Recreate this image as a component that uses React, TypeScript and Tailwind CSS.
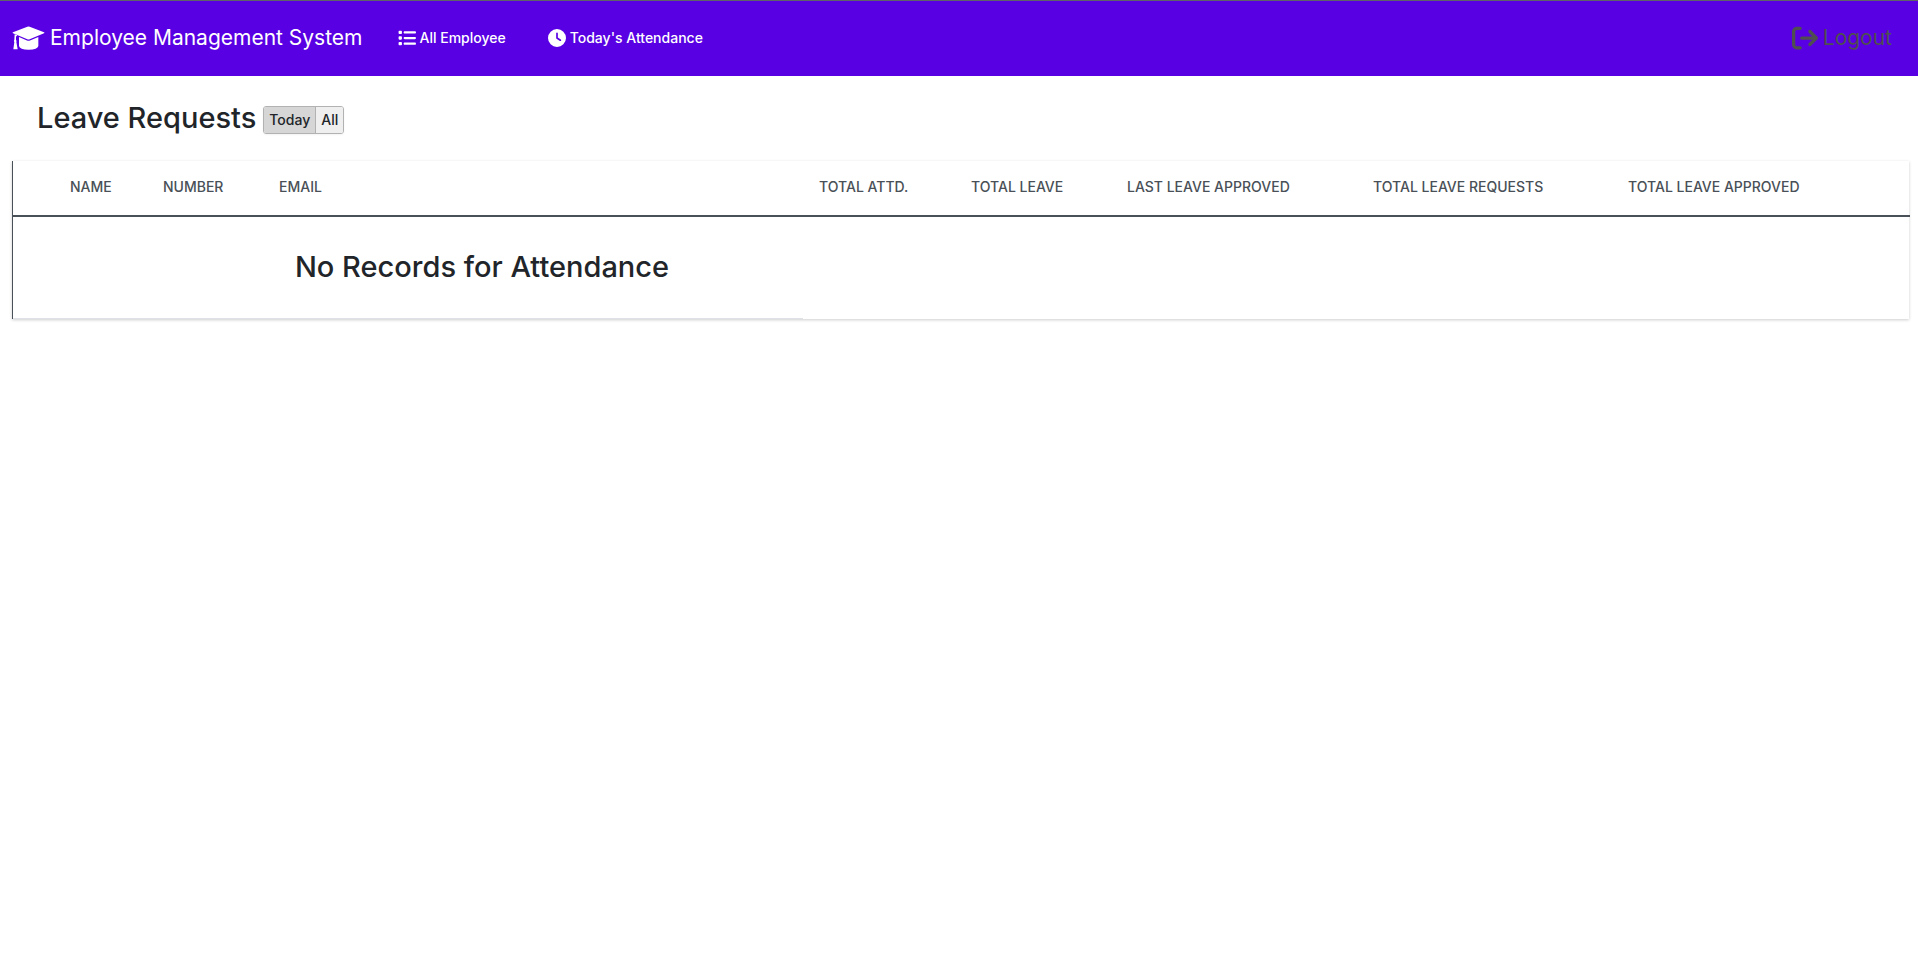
import { useState } from "react";
import { FaArrowRightFromBracket, FaClock, FaList } from "react-icons/fa6";

const columns = [
  { label: "", width: "w-[41px]" },
  { label: "Name", width: "w-[93px]" },
  { label: "Number", width: "w-[116px]" },
  { label: "Email", width: "w-[540px]" },
  { label: "Total Attd.", width: "w-[152px]" },
  { label: "Total Leave", width: "w-[156px]" },
  { label: "Last Leave Approved", width: "w-[246px]" },
  { label: "Total Leave Requests", width: "w-[255px]" },
  { label: "Total Leave Approved", width: "w-[298px]" },
];

function MortarboardIcon({ className }: { className?: string }) {
  return (
    <svg viewBox="0 0 99 72" fill="currentColor" aria-hidden="true" className={className}>
      <path d="M3 19 46 2Q49.500 1 53 2L96 19Q99 20.500 96 22L53 39.500Q49.500 41 46 39.500L3 22Q0 20.500 3 19Z" />
      <path d="M21 33 45 43.500Q49.500 45.500 54 43.500L79 33V60Q77 71 50 71 23 71 21 60Z" />
      <path d="M8 25 16 28 12 32V41Q15 45 13 48L17 70H4L7 48Q4 45 7 41Z" />
    </svg>
  );
}

function NavBar() {
  return (
    <header className="flex h-[76px] items-center border-t border-[#5f6368] bg-[#5800e3] pr-[26px] pb-0.5 pl-3 text-white">
      <a href="#home" className="flex items-center gap-[5px] text-[21px] leading-8">
        <MortarboardIcon className="h-6 w-[33px]" />
        Employee Management System
      </a>
      <nav className="ml-[35px] flex items-center gap-[42px] text-[14px] leading-6 font-medium">
        <a href="#employees" className="flex items-center gap-1">
          <FaList className="size-[18px]" />
          All Employee
        </a>
        <a href="#attendance" className="flex items-center gap-1">
          <FaClock className="size-[18px]" />
          Today's Attendance
        </a>
      </nav>
      <button
        type="button"
        className="ml-auto flex items-center gap-[5px] text-[21px] leading-8 text-[#4f4f4f]"
      >
        <FaArrowRightFromBracket className="size-[26px]" />
        Logout
      </button>
    </header>
  );
}

function RangeToggle() {
  const [range, setRange] = useState("Today");
  return (
    <div className="mt-1 flex h-7 overflow-hidden rounded-[3px] border border-[#b2b2b2] text-[14px] leading-6 shadow-xs">
      {["Today", "All"].map((name) => (
        <button
          key={name}
          type="button"
          aria-pressed={range === name}
          onClick={() => setRange(name)}
          className="border-l border-[#b2b2b2] bg-[#efefef] px-[5px] font-medium first:border-l-0 aria-pressed:bg-[#d6d6d6]"
        >
          {name}
        </button>
      ))}
    </div>
  );
}

export default function App() {
  return (
    <div className="min-h-screen bg-white font-['Inter',sans-serif] text-[#212529]">
      <NavBar />
      <main className="pt-6">
        <div className="flex items-center gap-[7px] px-[37px]">
          <h1 className="text-[29px] leading-9 font-medium">Leave Requests</h1>
          <RangeToggle />
        </div>
        <div className="mt-[25px] mr-[9px] ml-3 border-l border-[#495057] shadow-[0_1px_3px_rgba(0,0,0,0.2)]">
          <table className="w-full table-fixed border-separate border-spacing-0 text-left">
            <thead>
              <tr>
                {columns.map((column, index) => (
                  <th
                    key={index}
                    scope="col"
                    className={`${column.width} h-14 border-b-2 border-[#495057] px-4 pb-0.5 text-[14px] leading-6 font-medium whitespace-nowrap text-[#495057] uppercase`}
                  >
                    {column.label}
                  </th>
                ))}
              </tr>
            </thead>
            <tbody>
              <tr>
                <td
                  colSpan={4}
                  className="h-[102px] border-b border-[#dee2e6] pr-4 pb-0.5 pl-[164px] text-center"
                >
                  <h2 className="text-[29px] leading-9 font-medium">No Records for Attendance</h2>
                </td>
                <td colSpan={5} />
              </tr>
            </tbody>
          </table>
        </div>
      </main>
    </div>
  );
}
